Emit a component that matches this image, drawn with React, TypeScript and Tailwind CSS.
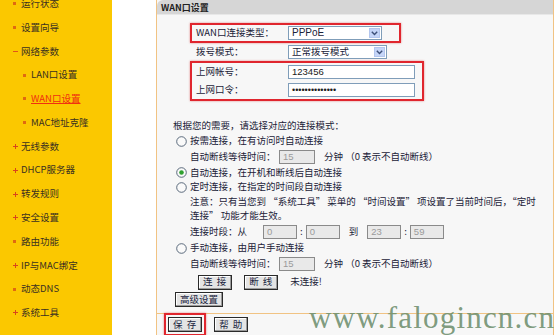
import React from "react";

type Bullet = "dot" | "plus" | "dash";

const menu: Array<{ label: string; bullet: Bullet; sub?: boolean; active?: boolean }> = [
  { label: "运行状态", bullet: "dot" },
  { label: "设置向导", bullet: "dot" },
  { label: "网络参数", bullet: "dash" },
  { label: "LAN口设置", bullet: "dot", sub: true },
  { label: "WAN口设置", bullet: "dot", sub: true, active: true },
  { label: "MAC地址克隆", bullet: "dot", sub: true },
  { label: "无线参数", bullet: "plus" },
  { label: "DHCP服务器", bullet: "plus" },
  { label: "转发规则", bullet: "plus" },
  { label: "安全设置", bullet: "plus" },
  { label: "路由功能", bullet: "dot" },
  { label: "IP与MAC绑定", bullet: "plus" },
  { label: "动态DNS", bullet: "dot" },
  { label: "系统工具", bullet: "plus" },
];

function MenuBullet({ kind }: { kind: Bullet }) {
  if (kind === "dash") return <span className="w-[5px] h-[1.5px] bg-[#e0561a]" />;
  if (kind === "plus")
    return (
      <svg width="5" height="5" viewBox="0 0 5 5">
        <path d="M2 0h1v2h2v1H3v2H2V3H0V2h2z" fill="#d9441c" />
      </svg>
    );
  return <span className="w-[3px] h-[3px] bg-[#e06a10]" />;
}

function Sidebar() {
  return (
    <aside className="w-[112px] shrink-0 bg-[#fbc800] flex flex-col -mt-[8px]">
      {menu.map((m) => (
        <div
          key={m.label}
          className={`h-[23.77px] shrink-0 flex items-center ${m.sub ? "pl-[23px]" : "pl-[13px]"}`}
        >
          <span className="w-[8px] flex items-center">
            <MenuBullet kind={m.bullet} />
          </span>
          <span
            className={m.active ? "text-[#f03010] underline underline-offset-1" : "text-[#3a3020]"}
          >
            {m.label}
          </span>
        </div>
      ))}
    </aside>
  );
}

function Chevron() {
  return (
    <svg width="7" height="5" viewBox="0 0 7 5">
      <path d="M0.8 0.8L3.5 3.6L6.2 0.8" fill="none" stroke="#3c4f78" strokeWidth="1.4" />
    </svg>
  );
}

function Select({ value, width }: { value: string; width: string }) {
  return (
    <div className={`flex items-center h-[14px] bg-white border border-[#7f9db9] ${width}`}>
      <span className="flex-1 pl-[3px] leading-none">{value}</span>
      <span className="w-[11px] h-[10px] mr-[1px] bg-[#c5d5f8] border border-[#b3c6ee] flex items-center justify-center">
        <Chevron />
      </span>
    </div>
  );
}

function TextBox({ value, width, disabled }: { value: string; width: string; disabled?: boolean }) {
  return (
    <div
      className={`flex items-center h-[14px] border pl-[3px] leading-none font-['Liberation_Sans',sans-serif] text-[9.5px] ${width} ${
        disabled ? "bg-[#e9e9e9] border-[#8a8a8a] text-[#9a9a9a]" : "bg-white border-[#7f9db9] text-[#202020]"
      }`}
    >
      {value}
    </div>
  );
}

function Radio({ checked }: { checked?: boolean }) {
  return (
    <svg width="11" height="11" viewBox="0 0 11 11" className="shrink-0">
      <circle cx="5.5" cy="5.5" r="4.8" fill="#fafafa" stroke="#4a5a6e" strokeWidth="0.9" />
      {checked && <circle cx="5.5" cy="5.5" r="2.3" fill="#2fa12f" />}
    </svg>
  );
}

function Btn({ children, className = "" }: { children: React.ReactNode; className?: string }) {
  return (
    <button
      className={`h-[15px] px-[4px] bg-[#e4e4e4] border border-[#2a2a2a] shadow-[inset_-1px_-1px_0_#9a9a9a,inset_1px_1px_0_#ffffff] text-[#1b2440] leading-none tracking-[1px] ${className}`}
    >
      {children}
    </button>
  );
}

export default function App() {
  return (
    <div className="relative flex w-[554px] h-[335px] overflow-hidden bg-white font-['Noto_Sans_CJK_SC',sans-serif] text-[9.5px] leading-none">
      <Sidebar />
      <main className="ml-[44px] flex-1 flex flex-col bg-[#f7f7f7] border-l border-r border-[#f1c383]">
        <div className="h-[15px] bg-[#d6d6d6] rounded-tl-[6px] border-b border-[#e8e8e8] flex items-center pl-[4px] font-bold text-[9px] text-[#222]">
          WAN口设置
        </div>

        <div className="flex flex-col text-[#1b2238]">
          <div className="ml-[33px] mt-[8px] w-[211px] h-[20px] border-2 border-[#e0262e] shadow-[0_0_2px_rgba(200,0,0,0.45)] pl-[4px] flex items-center">
            <span className="w-[92px]">WAN口连接类型：</span>
            <div className="font-['Liberation_Sans',sans-serif] text-[10px]">
              <Select value="PPPoE" width="w-[94px]" />
            </div>
          </div>
          <div className="ml-[33px] h-[18px] pl-[6px] flex items-center">
            <span className="w-[92px]">拨号模式：</span>
            <Select value="正常拨号模式" width="w-[99px]" />
          </div>
          <div className="ml-[33px] w-[234px] border-2 border-[#e0262e] shadow-[0_0_2px_rgba(200,0,0,0.45)] pl-[4px] flex flex-col">
            <div className="h-[18px] flex items-center">
              <span className="w-[92px]">上网帐号：</span>
              <TextBox value="123456" width="w-[127px]" />
            </div>
            <div className="h-[18px] flex items-center">
              <span className="w-[92px]">上网口令：</span>
              <div className="flex items-center h-[14px] w-[127px] bg-white border border-[#7f9db9] pl-[3px] font-['Liberation_Sans',sans-serif] text-[9px] text-[#202020]">
                ••••••••••••••
              </div>
            </div>
          </div>

          <div className="mt-[18px] ml-[16px] h-[14px] flex items-center">根据您的需要，请选择对应的连接模式：</div>
          <div className="ml-[19px] h-[16px] flex items-center gap-[3px]">
            <Radio />
            <span>按需连接，在有访问时自动连接</span>
          </div>
          <div className="ml-[33px] h-[16px] flex items-center">
            <span className="w-[89px]">自动断线等待时间：</span>
            <TextBox value="15" width="w-[36px]" disabled />
            <span className="ml-[9px]">分钟 （0 表示不自动断线）</span>
          </div>
          <div className="ml-[19px] h-[15px] flex items-center gap-[3px]">
            <Radio checked />
            <span>自动连接，在开机和断线后自动连接</span>
          </div>
          <div className="ml-[19px] h-[14px] flex items-center gap-[3px]">
            <Radio />
            <span>定时连接，在指定的时间段自动连接</span>
          </div>
          <div className="ml-[33px] h-[15px] flex items-center">
            注意：只有当您到 “系统工具” 菜单的 “时间设置” 项设置了当前时间后，“定时
          </div>
          <div className="ml-[33px] h-[14px] flex items-center">连接” 功能才能生效。</div>
          <div className="ml-[33px] h-[17px] flex items-center">
            <span>连接时段：从</span>
            <TextBox value="0" width="ml-[16px] w-[34px]" disabled />
            <span className="mx-[3px]">:</span>
            <TextBox value="0" width="w-[34px]" disabled />
            <span className="mx-[9px]">到</span>
            <TextBox value="23" width="w-[34px]" disabled />
            <span className="mx-[3px]">:</span>
            <TextBox value="59" width="w-[34px]" disabled />
          </div>
          <div className="ml-[19px] h-[16px] flex items-center gap-[3px]">
            <Radio />
            <span>手动连接，由用户手动连接</span>
          </div>
          <div className="ml-[33px] h-[16px] flex items-center">
            <span className="w-[89px]">自动断线等待时间：</span>
            <TextBox value="15" width="w-[36px]" disabled />
            <span className="ml-[9px]">分钟 （0 表示不自动断线）</span>
          </div>
          <div className="ml-[41px] h-[18px] mt-[1px] flex items-center">
            <Btn>连 接</Btn>
            <Btn className="ml-[12px]">断 线</Btn>
            <span className="ml-[12px]">未连接!</span>
          </div>
          <div className="ml-[18px] h-[17px] flex items-center">
            <Btn className="tracking-normal">高级设置</Btn>
          </div>
        </div>

        <div className="mt-auto h-[22px] border-t border-[#f1c383] flex items-center pl-[7px]">
          <div className="border-2 border-[#e0262e] shadow-[0_0_2px_rgba(200,0,0,0.45)] px-[2px] py-[2px]">
            <Btn>保 存</Btn>
          </div>
          <Btn className="ml-[8px]">帮 助</Btn>
        </div>
      </main>

      <div className="absolute left-[309px] top-[302px] font-['Liberation_Serif',serif] text-[31px] leading-none tracking-[1.2px] text-[#6f906f]/90 pointer-events-none whitespace-nowrap">
        www.falogincn.cn
      </div>
    </div>
  );
}
